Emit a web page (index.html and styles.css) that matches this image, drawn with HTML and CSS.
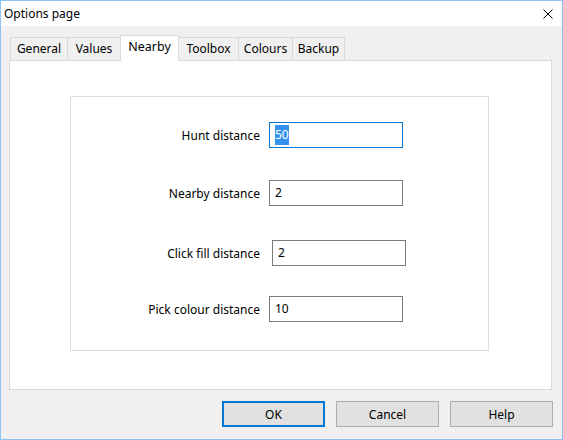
FILE: index.html
```html
<!DOCTYPE html>
<html lang="en">
<head>
    <meta charset="UTF-8">
    <title>Options page</title>
    <link rel="stylesheet" href="styles.css">
</head>
<body>
    <div class="window">
        <div class="titlebar">
            <span class="title">Options page</span>
            <svg class="close" width="10" height="10" viewBox="0 0 10 10">
                <path d="M0.5 0.5 L9.5 9.5 M9.5 0.5 L0.5 9.5" stroke="#000" stroke-width="1" fill="none"/>
            </svg>
        </div>
        <div class="content">
            <div class="tabs">
                <div class="tab">General</div>
                <div class="tab">Values</div>
                <div class="tab active">Nearby</div>
                <div class="tab">Toolbox</div>
                <div class="tab">Colours</div>
                <div class="tab">Backup</div>
            </div>
            <div class="panel">
                <div class="group">
                    <div class="field-row">
                        <label class="field-label">Hunt distance</label>
                        <div class="textbox focused"><span class="selected">50</span></div>
                    </div>
                    <div class="field-row">
                        <label class="field-label">Nearby distance</label>
                        <div class="textbox">2</div>
                    </div>
                    <div class="field-row shifted">
                        <label class="field-label">Click fill distance</label>
                        <div class="textbox">2</div>
                    </div>
                    <div class="field-row last">
                        <label class="field-label">Pick colour distance</label>
                        <div class="textbox">10</div>
                    </div>
                </div>
            </div>
            <div class="buttons">
                <button class="btn default">OK</button>
                <button class="btn">Cancel</button>
                <button class="btn">Help</button>
            </div>
        </div>
    </div>
</body>
</html>
```

FILE: styles.css
```css
body {
    margin: 0;
    font-family: "Noto Sans", "Open Sans", sans-serif;
    font-size: 12px;
    color: #000;
}

.window {
    width: 563px;
    height: 440px;
    box-sizing: border-box;
    border: 1px solid #8ec2f0;
    display: flex;
    flex-direction: column;
    background-color: #f0f0f0;
}

.titlebar {
    height: 25px;
    background-color: #fff;
    display: flex;
    align-items: center;
    justify-content: space-between;
    padding: 0 9px 0 3px;
}

.content {
    flex: 1;
    padding: 9px 0 0 8px;
}

.tabs {
    display: grid;
    grid-template-columns: 57px 53px 58px 60px 54px 53px;
    align-items: end;
    width: max-content;
    height: 25px;
    padding-left: 1px;
}

.tab {
    height: 22px;
    line-height: 22px;
    text-align: center;
    border: 1px solid #d9d9d9;
    border-bottom: none;
    border-right: none;
    background-color: #f0f0f0;
}

.tab:last-child {
    border-right: 1px solid #d9d9d9;
}

.tab.active {
    position: relative;
    z-index: 1;
    height: 25px;
    line-height: 22px;
    margin-bottom: -1px;
    margin-right: -1px;
    border-right: 1px solid #d9d9d9;
    background-color: #fff;
    font-size: 12.5px;
}

.panel {
    width: 543px;
    height: 330px;
    box-sizing: border-box;
    border: 1px solid #d9d9d9;
    background-color: #fff;
    padding: 35px 0 0 60px;
}

.group {
    width: 419px;
    height: 255px;
    box-sizing: border-box;
    border: 1px solid #dcdcdc;
    padding-top: 25px;
    display: flex;
    flex-direction: column;
    gap: 32px;
}

.field-row {
    display: flex;
    align-items: center;
    gap: 9px;
}

.field-label {
    width: 189px;
    text-align: right;
}

.textbox {
    width: 134px;
    height: 26px;
    box-sizing: border-box;
    border: 1px solid #7a7a7a;
    padding-left: 5px;
    line-height: 24px;
}

.textbox.focused {
    border-color: #0078d7;
}

.selected {
    background-color: #3392f0;
    color: #fff;
    display: inline-block;
    line-height: 20px;
}

.field-row.shifted {
    margin-top: 2px;
}

.field-row.shifted .textbox {
    margin-left: 3px;
}

.field-row.last {
    margin-top: -2px;
}

.buttons {
    display: flex;
    justify-content: flex-end;
    gap: 11px;
    padding: 11px 9px 0 0;
}

.btn {
    width: 103px;
    height: 26px;
    box-sizing: border-box;
    border: 1px solid #adadad;
    background-color: #e1e1e1;
    font-family: inherit;
    font-size: 12px;
    color: #000;
    padding: 0;
}

.btn.default {
    border: 2px solid #0078d7;
}
```
